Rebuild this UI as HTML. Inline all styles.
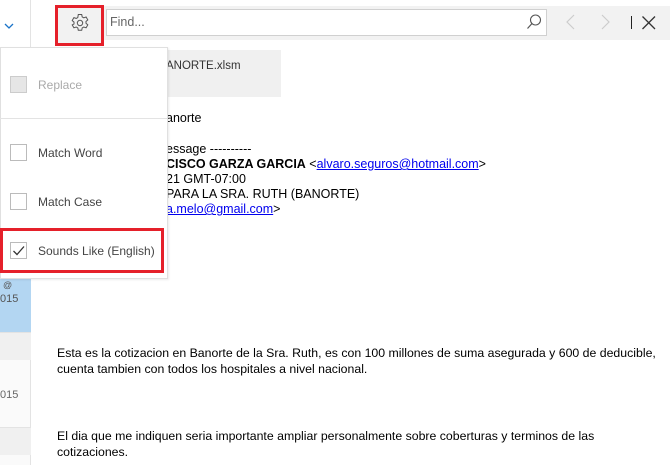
<!DOCTYPE html>
<html><head><style>
*{margin:0;padding:0;box-sizing:border-box}
body{width:670px;height:465px;overflow:hidden;background:#fff;font-family:"Liberation Sans",sans-serif;position:relative;color:#000}
.a{position:absolute}
.t{font-size:12.5px;white-space:nowrap;line-height:15px}
.p{font-size:12.3px}
a{color:#00e;text-decoration:underline}
.cb{position:absolute;left:10px;width:17px;height:17px;border:1px solid #bbb;background:#fff}
.lbl{position:absolute;left:38px;font-size:12px;color:#444;white-space:nowrap}
</style></head><body>
<div class="a" style="left:0;top:0;width:31px;height:465px;background:#fafafa;border-right:1px solid #e3e3e3"></div>
<div class="a" style="left:0;top:0;width:31px;height:48px;background:#fff;border-right:1px solid #e3e3e3"></div>
<svg class="a" style="left:4px;top:22px" width="10" height="8"><path d="M1 2 L5 6 L9 2" stroke="#1a73c8" stroke-width="1.3" fill="none"/></svg>
<div class="a" style="left:0;top:278px;width:31px;height:54px;background:#b3d6f2"></div>
<div class="a t" style="left:3px;top:278px;font-size:9px;color:#555">@</div>
<div class="a t" style="left:0;top:292px;font-size:11px;color:#555">015</div>
<div class="a" style="left:0;top:332px;width:31px;height:28px;background:#f0f0f0;border-top:1px solid #e3e3e3"></div>
<div class="a t" style="left:0;top:388px;font-size:11px;color:#666">015</div>
<div class="a" style="left:0;top:427px;width:31px;height:28px;background:#f0f0f0;border-top:1px solid #e3e3e3"></div>
<div class="a" style="left:55px;top:6px;width:615px;height:34px;background:#f2f2f2"></div>
<div class="a" style="left:106px;top:9px;width:441px;height:27px;background:#fff;border:1px solid #d0d0d0"></div>
<div class="a t" style="left:110px;top:15px;font-size:12.5px;color:#666">Find...</div>
<svg class="a" style="left:526px;top:13px" width="16" height="18"><circle cx="9.5" cy="7" r="5" stroke="#555" fill="none" stroke-width="1.1"/><path d="M6 10.5 L1.5 15.5" stroke="#555" stroke-width="1.2"/></svg>
<svg class="a" style="left:565px;top:14px" width="12" height="18"><path d="M9 1 L2 8 L9 15" stroke="#ccc" fill="none" stroke-width="1.2"/></svg>
<svg class="a" style="left:600px;top:14px" width="12" height="18"><path d="M2 1 L9 8 L2 15" stroke="#ccc" fill="none" stroke-width="1.2"/></svg>
<div class="a" style="left:631px;top:16px;width:1px;height:13px;background:#222"></div>
<svg class="a" style="left:641px;top:15px" width="16" height="16"><path d="M1.5 1.5 L14 14 M14 1.5 L1.5 14" stroke="#333" stroke-width="1.3"/></svg>
<div class="a" style="left:55px;top:5px;width:49px;height:41px;border:3px solid #e5202a;background:#f2f2f2"></div>
<svg class="a" style="left:70px;top:13px" width="20" height="20" viewBox="0 0 20 20"><path d="M8.3 1.5h3.4l.5 2.4 1.6.9 2.3-.8 1.7 2.9-1.8 1.6v1.8l1.8 1.6-1.7 2.9-2.3-.8-1.6.9-.5 2.4H8.3l-.5-2.4-1.6-.9-2.3.8-1.7-2.9L4 10.9V9.1L2.2 7.5l1.7-2.9 2.3.8 1.6-.9z" fill="none" stroke="#555" stroke-width="1"/><circle cx="10" cy="10" r="2.7" fill="none" stroke="#555" stroke-width="1"/></svg>
<div class="a" style="left:150px;top:50px;width:131px;height:47px;background:#f0f0f0"></div>
<div class="a t" style="left:166px;top:59px;font-size:11.5px;color:#333">ANORTE.xlsm</div>
<div class="a t" style="left:166px;top:111px">anorte</div>
<div class="a t" style="left:166px;top:142px">essage ----------</div>
<div class="a t" style="left:166px;top:157px"><b>CISCO GARZA GARCIA</b> &lt;<a>alvaro.seguros@hotmail.com</a>&gt;</div>
<div class="a t" style="left:166px;top:172px">21 GMT-07:00</div>
<div class="a t" style="left:166px;top:187px">PARA LA SRA. RUTH (BANORTE)</div>
<div class="a t" style="left:166px;top:202px"><a>a.melo@gmail.com</a>&gt;</div>
<div class="a t p" style="left:57px;top:346px">Esta es la cotizacion en Banorte de la Sra. Ruth, es con 100 millones de suma asegurada y 600 de deducible,</div>
<div class="a t p" style="left:57px;top:362px">cuenta tambien con todos los hospitales a nivel nacional.</div>
<div class="a t p" style="left:57px;top:429px">El dia que me indiquen seria importante ampliar personalmente sobre coberturas y terminos de las</div>
<div class="a t p" style="left:57px;top:445px">cotizaciones.</div>
<div class="a" style="left:0;top:47px;width:168px;height:232px;background:#fff;border:1px solid #e0e0e0;box-shadow:1px 1px 2px rgba(0,0,0,.08)"></div>
<div class="cb" style="top:76px;background:#e6e6e6;border-color:#ccc"></div>
<div class="lbl" style="top:78px;color:#aaa">Replace</div>
<div class="a" style="left:0;top:118px;width:167px;height:1px;background:#e3e3e3"></div>
<div class="cb" style="top:144px"></div>
<div class="lbl" style="top:146px">Match Word</div>
<div class="cb" style="top:193px"></div>
<div class="lbl" style="top:195px">Match Case</div>
<div class="cb" style="top:242px"></div>
<svg class="a" style="left:12px;top:245px" width="14" height="12"><path d="M1.5 6 L5 9.5 L12 1.5" stroke="#333" fill="none" stroke-width="1.3"/></svg>
<div class="lbl" style="top:244px">Sounds Like (English)</div>
<div class="a" style="left:0;top:228px;width:164px;height:45px;border:3px solid #e5202a"></div>
</body></html>
